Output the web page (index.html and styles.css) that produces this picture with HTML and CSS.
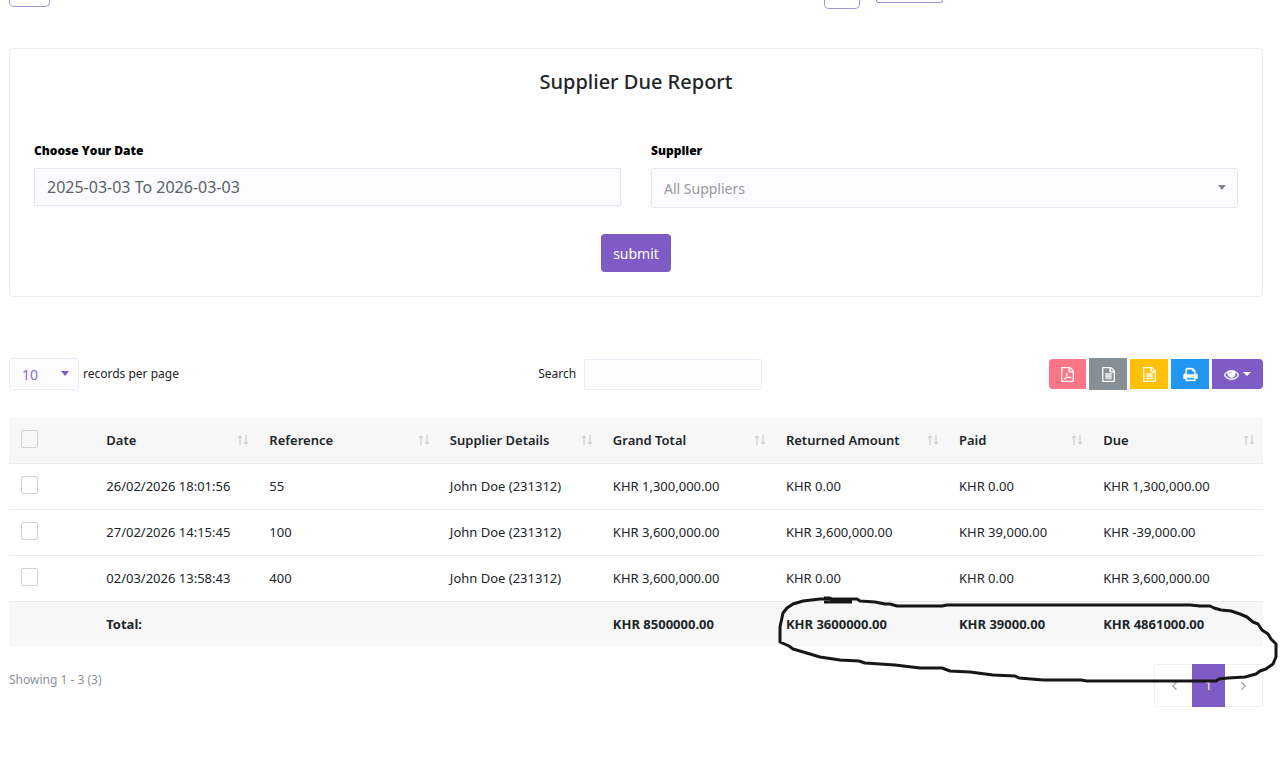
FILE: index.html
```html
<!DOCTYPE html>
<html lang="en">
<head>
    <meta charset="UTF-8">
    <meta name="viewport" content="width=device-width, initial-scale=1.0">
    <title>Supplier Due Report</title>
    <link rel="stylesheet" href="styles.css">
</head>
<body>
    <svg class="sprite" aria-hidden="true">
        <symbol id="icon-sort" viewBox="0 0 12 10">
            <path d="M3 10V1M1 3l2-2 2 2M9 0v9M7 7l2 2 2-2" fill="none" stroke="currentColor"/>
        </symbol>
        <symbol id="icon-file" viewBox="0 0 1536 1792">
            <path d="M1468 380q28 28 48 76t20 88v1152q0 40-28 68t-68 28h-1344q-40 0-68-28t-28-68v-1600q0-40 28-68t68-28h896q40 0 88 20t76 48zm-444-244v376h376q-10-29-22-41l-313-313q-12-12-41-22zm384 1528v-1024h-416q-40 0-68-28t-28-68v-416h-768v1536h1280z"/>
        </symbol>
        <symbol id="icon-text" viewBox="0 0 1536 1792">
            <use href="#icon-file"/>
            <path d="M384 800q0-14 9-23t23-9h704q14 0 23 9t9 23v64q0 14-9 23t-23 9h-704q-14 0-23-9t-9-23v-64zm736 224q14 0 23 9t9 23v64q0 14-9 23t-23 9h-704q-14 0-23-9t-9-23v-64q0-14 9-23t23-9h704zm0 256q14 0 23 9t9 23v64q0 14-9 23t-23 9h-704q-14 0-23-9t-9-23v-64q0-14 9-23t23-9h704z"/>
        </symbol>
    </svg>

    <header class="topbar">
        <div class="topbar-start">
            <button class="top-button top-menu" type="button" aria-label="Menu"></button>
        </div>
        <div class="topbar-end">
            <button class="top-button top-tool" type="button" aria-label="Tools"></button>
            <button class="top-button top-user" type="button" aria-label="Account"></button>
        </div>
    </header>

    <main>
        <form class="card">
            <h1>Supplier Due Report</h1>
            <div class="filters">
                <div class="field">
                    <label for="dateRange">Choose Your Date</label>
                    <input type="text" id="dateRange" class="control" value="2025-03-03 To 2026-03-03">
                </div>
                <div class="field">
                    <label for="supplier">Supplier</label>
                    <div class="select-wrap">
                        <select id="supplier" class="control">
                            <option>All Suppliers</option>
                        </select>
                    </div>
                </div>
            </div>
            <button class="submit" type="button">submit</button>
        </form>

        <div class="toolbar">
            <div class="page-length">
                <div class="select-wrap length-wrap">
                    <select id="pageLength" class="length-select">
                        <option>10</option>
                    </select>
                </div>
                <label for="pageLength">records per page</label>
            </div>
            <div class="search">
                <label for="search">Search</label>
                <input type="search" id="search">
            </div>
            <div class="exports">
                <button class="export pdf" type="button" aria-label="PDF">
                    <svg viewBox="0 0 1536 1792">
                        <use href="#icon-file"/>
                        <path d="M330 1450c170-60 350-330 390-590 20-150-70-170-70-40 0 240 230 470 480 490 140 10 110-90-60-90-230 0-480 60-740 230z" fill="none" stroke="currentColor" stroke-width="100"/>
                    </svg>
                </button>
                <button class="export csv" type="button" aria-label="CSV">
                    <svg><use href="#icon-text"/></svg>
                </button>
                <button class="export excel" type="button" aria-label="Excel">
                    <svg><use href="#icon-text"/></svg>
                </button>
                <button class="export print" type="button" aria-label="Print">
                    <svg viewBox="0 0 1792 1792"><path d="M448 1536h896v-256h-896v256zm0-640h896v-384h-160q-40 0-68-28t-28-68v-160h-640v640zm1152 64q0-26-19-45t-45-19-45 19-19 45 19 45 45 19 45-19 19-45zm128 0v416q0 13-9.5 22.5t-22.5 9.5h-224v160q0 40-28 68t-68 28h-960q-40 0-68-28t-28-68v-160h-224q-13 0-22.5-9.5t-9.5-22.5v-416q0-79 56.5-135.5t135.5-56.5h64v-544q0-40 28-68t68-28h672q40 0 88 20t76 48l152 152q28 28 48 76t20 88v256h64q79 0 135.5 56.5t56.5 135.5z"/></svg>
                </button>
                <button class="export columns" type="button" aria-label="Columns">
                    <svg viewBox="0 0 1792 1792"><path d="M1664 960q-152-236-381-353 61 104 61 225 0 185-131.5 316.5t-316.5 131.5-316.5-131.5-131.5-316.5q0-121 61-225-229 117-381 353 133 205 333.5 326.5t434.5 121.5 434.5-121.5 333.5-326.5zm-720-384q0-20-14-34t-34-14q-125 0-214.5 89.5t-89.5 214.5q0 20 14 34t34 14 34-14 14-34q0-86 61-147t147-61q20 0 34-14t14-34zm848 384q0 34-20 69-140 230-376.5 368.5t-499.5 138.5-499.5-139-376.5-368q-20-35-20-69t20-69q140-229 376.5-368t499.5-139 499.5 139 376.5 368q20 35 20 69z"/></svg>
                    <span class="caret"></span>
                </button>
            </div>
        </div>

        <div class="table-wrap">
            <table>
                <colgroup>
                    <col class="col-check">
                    <col class="col-date">
                    <col class="col-reference">
                    <col class="col-supplier">
                    <col class="col-total">
                    <col class="col-returned">
                    <col class="col-paid">
                    <col class="col-due">
                </colgroup>
                <thead>
                    <tr>
                        <th><input type="checkbox" aria-label="Select all"></th>
                        <th><div class="head">Date <svg><use href="#icon-sort"/></svg></div></th>
                        <th><div class="head">Reference <svg><use href="#icon-sort"/></svg></div></th>
                        <th><div class="head">Supplier Details <svg><use href="#icon-sort"/></svg></div></th>
                        <th><div class="head">Grand Total <svg><use href="#icon-sort"/></svg></div></th>
                        <th><div class="head">Returned Amount <svg><use href="#icon-sort"/></svg></div></th>
                        <th><div class="head">Paid <svg><use href="#icon-sort"/></svg></div></th>
                        <th><div class="head">Due <svg><use href="#icon-sort"/></svg></div></th>
                    </tr>
                </thead>
                <tbody>
                    <tr>
                        <td><input type="checkbox" aria-label="Select 55"></td>
                        <td>26/02/2026 18:01:56</td>
                        <td>55</td>
                        <td>John Doe (231312)</td>
                        <td>KHR 1,300,000.00</td>
                        <td>KHR 0.00</td>
                        <td>KHR 0.00</td>
                        <td>KHR 1,300,000.00</td>
                    </tr>
                    <tr>
                        <td><input type="checkbox" aria-label="Select 100"></td>
                        <td>27/02/2026 14:15:45</td>
                        <td>100</td>
                        <td>John Doe (231312)</td>
                        <td>KHR 3,600,000.00</td>
                        <td>KHR 3,600,000.00</td>
                        <td>KHR 39,000.00</td>
                        <td>KHR -39,000.00</td>
                    </tr>
                    <tr>
                        <td><input type="checkbox" aria-label="Select 400"></td>
                        <td>02/03/2026 13:58:43</td>
                        <td>400</td>
                        <td>John Doe (231312)</td>
                        <td>KHR 3,600,000.00</td>
                        <td>KHR 0.00</td>
                        <td>KHR 0.00</td>
                        <td>KHR 3,600,000.00</td>
                    </tr>
                </tbody>
                <tfoot>
                    <tr>
                        <th></th>
                        <th>Total:</th>
                        <th></th>
                        <th></th>
                        <th>KHR 8500000.00</th>
                        <th>KHR 3600000.00</th>
                        <th>KHR 39000.00</th>
                        <th>KHR 4861000.00</th>
                    </tr>
                </tfoot>
            </table>
            <!-- pen mark round the totals -->
            <svg class="pen-mark" viewBox="772 590 508 98" aria-hidden="true">
                <path d="M780 641V626L783 612 787 607 793 603 803 600 820 598 857 598 860 600 875 601 885 603 890 603 897 605H942L947 604H1190L1200 605 1210 605 1214 607 1221 609 1231 610 1240 613 1247 616 1253 621 1258 623 1262 629 1268 633 1271 638 1274 641 1276 643V656L1273 663 1266 668 1260 670 1256 673 1245 676 1228 677 1219 678 1216 680H1087L1081 679 1043 679 1019 677 1015 675 993 674 970 671 950 670 942 667 920 667 895 664 865 662 859 660 840 659 820 656 810 653 793 648 789 645Z"/>
                <path d="M824 597h6l2 2h20M824 601h28"/>
            </svg>
        </div>

        <div class="table-footer">
            <div class="info">Showing 1 - 3 (3)</div>
            <nav class="pagination" aria-label="Pages">
                <a href="#" aria-label="Previous"><svg viewBox="0 0 6 8"><path d="M5 1L2 4l3 3"/></svg></a>
                <a href="#" class="active">1</a>
                <a href="#" aria-label="Next"><svg viewBox="0 0 6 8"><path d="M1 1l3 3-3 3"/></svg></a>
            </nav>
        </div>
    </main>
</body>
</html>
```
FILE: styles.css
```css
* {
    box-sizing: border-box;
}
body {
    margin: 0;
    padding: 0 17px 0 9px;
    background: #fff;
    color: #212529;
    font-family: "Noto Sans", "Open Sans", sans-serif;
    font-size: 13px;
    line-height: 20px;
}
button, input, select {
    font-family: inherit;
    margin: 0;
}
.sprite {
    position: absolute;
    width: 0;
    height: 0;
}
.topbar {
    display: flex;
    height: 48px;
}
.topbar-start {
    width: 65%;
}
.topbar-start, .topbar-end {
    display: flex;
    gap: 16px;
    align-items: flex-start;
}
.top-button {
    padding: 0;
    background: #fff;
    border: 1px solid #a193cf;
    border-top: 0;
    border-radius: 0 0 5px 5px;
}
.top-menu {
    width: 41px;
    height: 7px;
}
.top-tool {
    width: 36px;
    height: 9px;
}
.top-user {
    width: 67px;
    height: 3px;
}
.card {
    display: flex;
    flex-direction: column;
    padding: 20px 24px 24px;
    border: 1px solid #ebebf3;
    border-radius: 5px;
}
h1 {
    margin: 0 0 46px;
    font-size: 20px;
    line-height: 26px;
    font-weight: 500;
    text-align: center;
}
.filters {
    display: grid;
    grid-template-columns: 1fr 1fr;
    gap: 30px;
}
.field label {
    display: block;
    margin-bottom: 7px;
    font-family: "Open Sans", "Noto Sans", sans-serif;
    font-size: 12px;
    font-weight: 800;
    color: #000;
}
.control {
    display: block;
    width: 100%;
    height: 38px;
    padding: 0 12px;
    border: 1px solid #e4e6f0;
    background: #fcfcff;
    color: #596066;
    font-size: 16px;
    border-radius: 0;
}
.select-wrap {
    position: relative;
}
.select-wrap select {
    appearance: none;
}
.select-wrap .control {
    height: 40px;
    color: #999;
    border-radius: 3px;
    font-size: 14px;
}
.select-wrap::after {
    content: "";
    position: absolute;
    top: 50%;
    right: 12px;
    margin-top: -3px;
    border: 4px solid transparent;
    border-top: 5px solid #888;
    border-bottom: 0;
    pointer-events: none;
}
.submit {
    align-self: center;
    height: 38px;
    margin-top: 26px;
    padding: 0 12px;
    border: 0;
    border-radius: 4px;
    background: #7e5bc5;
    color: #fff;
    font-size: 14px;
}
.toolbar {
    display: grid;
    grid-template-columns: 42.2% 1fr auto;
    align-items: center;
    margin: 61px 0 28px;
}
.page-length, .search {
    display: flex;
    align-items: center;
}
.page-length {
    gap: 4px;
    font-size: 12px;
}
.search {
    gap: 8px;
    font-size: 12px;
}
.length-wrap::after {
    right: 10px;
    border-top-color: #7e5bc5;
}
.length-select {
    width: 70px;
    height: 32px;
    padding: 0 12px;
    border: 1px solid #ececf8;
    border-radius: 3px;
    background: #fcfcff;
    color: #8a6bca;
    font-size: 14px;
}
.search input {
    width: 178px;
    height: 31px;
    padding: 0 8px;
    border: 1px solid #ececf6;
    border-radius: 2px;
    background: #fcfcff;
    font-size: 13px;
}
.exports {
    display: flex;
    align-items: center;
    gap: 3px;
}
.export {
    display: flex;
    align-items: center;
    justify-content: center;
    gap: 4px;
    width: 38px;
    height: 30px;
    padding: 0;
    border: 0;
    color: #fff;
}
.export svg {
    width: 13px;
    height: 15px;
    fill: currentColor;
    stroke: currentColor;
    stroke-width: 50px;
}
.pdf {
    width: 37px;
    background: #ff7588;
    border-radius: 4px 0 0 4px;
}
.csv {
    height: 32px;
    background: #868e96;
}
.excel {
    background: #ffc107;
}
.print {
    background: #2196f3;
}
.columns {
    width: 51px;
    background: #7e5bc5;
    border-radius: 0 4px 4px 0;
}
.print svg, .columns svg {
    width: 15px;
}
.caret {
    border: 4px solid transparent;
    border-top-color: #fff;
    border-bottom: 0;
}
.table-wrap {
    position: relative;
}
table {
    width: 100%;
    table-layout: fixed;
    border-collapse: collapse;
}
.col-check {
    width: 6.8%;
}
.col-date, .col-supplier {
    width: 13%;
}
.col-reference {
    width: 14.4%;
}
.col-total, .col-returned {
    width: 13.8%;
}
.col-paid {
    width: 11.5%;
}
th, td {
    height: 45px;
    padding: 0 12px;
    text-align: left;
    white-space: nowrap;
}
td {
    height: 46px;
}
thead th {
    padding-right: 8px;
    font-weight: 600;
}
thead, tfoot {
    background: #f7f7f7;
}
tr {
    border-bottom: 1px solid #ebebeb;
}
tfoot tr {
    border-top: 1px solid #ddd;
    border-bottom: 0;
}
tfoot th {
    font-weight: 700;
}
.head {
    display: flex;
    align-items: center;
    justify-content: space-between;
}
.head svg {
    flex: none;
    width: 12px;
    height: 10px;
    color: #c4c4c4;
}
input[type="checkbox"] {
    display: block;
    appearance: none;
    width: 17px;
    height: 18px;
    margin-bottom: 3px;
    border: 1px solid #d2d2d2;
    border-radius: 2px;
    background: #fff;
}
thead input[type="checkbox"] {
    background: #f7f7f7;
}
.pen-mark {
    position: absolute;
    right: -17px;
    bottom: -43px;
    z-index: 1;
    width: 508px;
    height: 98px;
    pointer-events: none;
}
.pen-mark path {
    fill: none;
    stroke: #171719;
    stroke-width: 3;
    stroke-linejoin: round;
}
.table-footer {
    display: flex;
    justify-content: space-between;
    margin-top: 18px;
}
.info {
    padding-top: 6px;
    color: #8d949b;
    font-size: 12px;
}
.pagination {
    display: flex;
    height: 43px;
    border: 1px solid #f0f0f0;
    border-radius: 3px;
}
.pagination a {
    display: flex;
    align-items: center;
    justify-content: center;
    width: 37px;
    color: #a5a5a5;
    font-size: 12px;
    text-decoration: none;
}
.pagination .active {
    width: 33px;
    margin: -1px 0;
    background: #7e5bc5;
    color: #fff;
}
.pagination svg {
    width: 8px;
    height: 10px;
    fill: none;
    stroke: currentColor;
}
```
